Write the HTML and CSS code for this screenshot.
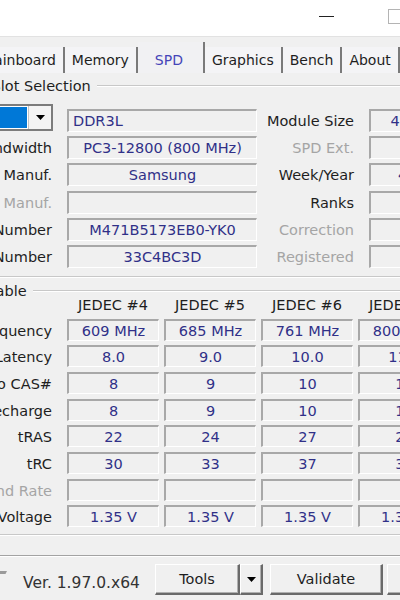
FILE: index.html
```html
<!DOCTYPE html>
<html lang="en">
<head>
  <title>CPU-Z — SPD</title>
  <meta charset="utf-8">
  <meta name="viewport" content="width=device-width, initial-scale=1">
  <link rel="stylesheet" href="styles.css">
</head>
<body>

  <div class="window">
    <div class="titlebar">
      <span class="win-btn win-min"></span>
      <span class="win-btn win-max"></span>
      <span class="win-btn win-close"></span>
    </div>

    <div class="tabs">
      <span class="tab">Mainboard</span>
      <span class="tab">Memory</span>
      <span class="tab tab-active">SPD</span>
      <span class="tab">Graphics</span>
      <span class="tab">Bench</span>
      <span class="tab">About</span>
    </div>

    <div class="panel">
      <section class="group">
        <div class="group-title"><span>Memory Slot Selection</span></div>
        <div class="slot-grid">
          <div class="combo">
            <span class="combo-value">Slot #1</span>
            <span class="combo-arrow">
              <svg width="9" height="5" viewBox="0 0 9 5"><path d="M0 0h9L4.5 5z" fill="#000"/></svg>
            </span>
          </div>
          <div class="field field-left">DDR3L</div>
          <div class="label">Module Size</div>
          <div class="field">4 GBytes</div>

          <div class="label">Max Bandwidth</div>
          <div class="field">PC3-12800 (800 MHz)</div>
          <div class="label label-off">SPD Ext.</div>
          <div class="field"></div>

          <div class="label">Module Manuf.</div>
          <div class="field">Samsung</div>
          <div class="label">Week/Year</div>
          <div class="field">40 / 13</div>

          <div class="label label-off">DRAM Manuf.</div>
          <div class="field"></div>
          <div class="label">Ranks</div>
          <div class="field">Dual</div>

          <div class="label">Part Number</div>
          <div class="field">M471B5173EB0-YK0</div>
          <div class="label label-off">Correction</div>
          <div class="field"></div>

          <div class="label">Serial Number</div>
          <div class="field">33C4BC3D</div>
          <div class="label label-off">Registered</div>
          <div class="field"></div>
        </div>
      </section>

      <section class="group group-timings">
        <div class="group-title group-title-tight"><span>Timings Table</span></div>
        <div class="timings-grid">
          <div></div>
          <div class="col-head">JEDEC #4</div>
          <div class="col-head">JEDEC #5</div>
          <div class="col-head">JEDEC #6</div>
          <div class="col-head">JEDEC #7</div>

          <div class="label">Frequency</div>
          <div class="field">609 MHz</div>
          <div class="field">685 MHz</div>
          <div class="field">761 MHz</div>
          <div class="field">800 MHz</div>

          <div class="label">CAS# Latency</div>
          <div class="field">8.0</div>
          <div class="field">9.0</div>
          <div class="field">10.0</div>
          <div class="field">11.0</div>

          <div class="label">RAS# to CAS#</div>
          <div class="field">8</div>
          <div class="field">9</div>
          <div class="field">10</div>
          <div class="field">11</div>

          <div class="label">RAS# Precharge</div>
          <div class="field">8</div>
          <div class="field">9</div>
          <div class="field">10</div>
          <div class="field">11</div>

          <div class="label">tRAS</div>
          <div class="field">22</div>
          <div class="field">24</div>
          <div class="field">27</div>
          <div class="field">28</div>

          <div class="label">tRC</div>
          <div class="field">30</div>
          <div class="field">33</div>
          <div class="field">37</div>
          <div class="field">39</div>

          <div class="label label-off">Command Rate</div>
          <div class="field"></div>
          <div class="field"></div>
          <div class="field"></div>
          <div class="field"></div>

          <div class="label">Voltage</div>
          <div class="field">1.35 V</div>
          <div class="field">1.35 V</div>
          <div class="field">1.35 V</div>
          <div class="field">1.35 V</div>
        </div>
      </section>
    </div>

    <div class="footer">
      <svg class="logo" width="20" height="20" viewBox="0 0 20 20">
        <path d="M6 3h13l-1.5 3H12l-4 12H4l4-12H5z" fill="#9a9a9a"/>
      </svg>
      <span class="version">Ver. 1.97.0.x64</span>
      <div class="split-btn">
        <span class="btn btn-main">Tools</span>
        <span class="btn btn-arrow">
          <svg width="9" height="5" viewBox="0 0 9 5"><path d="M0 0h9L4.5 5z" fill="#000"/></svg>
        </span>
      </div>
      <span class="btn btn-validate">Validate</span>
      <span class="btn btn-close">Close</span>
    </div>
  </div>

</body>
</html>
```

FILE: styles.css
```css
*, *::before, *::after {
  margin: 0;
  padding: 0;
  box-sizing: border-box;
}

html, body {
  overflow: hidden;
}

body {
  width: 400px;
  height: 600px;
  background-color: #f0f0f0;
  color: #1e1e1e;
  font-family: "DejaVu Sans", Verdana, sans-serif;
  font-size: 14.5px;
}

/* the window is wider than the viewport, its left part is cut off */
.window {
  width: 580px;
  margin-left: -80px;
}

.titlebar {
  height: 37px;
  display: flex;
  justify-content: flex-end;
  padding-right: 1px;
  background-color: #fff;
  border-bottom: 1px solid #e2e2e2;
}

.win-btn {
  width: 69px;
  height: 33px;
  display: flex;
  align-items: center;
  justify-content: center;
}

.win-min::before {
  content: "";
  width: 15px;
  height: 1px;
  background-color: #222;
}

.win-max::before {
  content: "";
  width: 15px;
  height: 15px;
  border: 1px solid #b4b4b4;
}

.tabs {
  height: 36px;
  display: flex;
  align-items: flex-end;
  padding-left: 55px;
  font-size: 14px;
}

.tab {
  height: 26px;
  padding: 0 7px;
  line-height: 26px;
  border-right: 2px solid #7a7a7a;
  background-color: #f4f4f6;
  white-space: nowrap;
}

.tab-active {
  height: 31px;
  padding: 5px 20px 0 17px;
  color: #4545b8;
  background-color: #f1f1f3;
}

.panel {
  padding-top: 4px;
  padding-bottom: 20px;
  border-bottom: 1px solid #a3a3a3;
  box-shadow: 0 1px 0 #fff;
}

.group {
  margin: 0 6px 0 2px;
  padding-bottom: 8px;
  border-bottom: 1px solid #c8c8c8;
  box-shadow: 0 1px 0 #fff;
}

.group-title {
  height: 18px;
  display: flex;
  align-items: center;
  padding-left: 6px;
  white-space: nowrap;
}

.group-title::after {
  content: "";
  flex: 1;
  margin-left: 6px;
  border-top: 1px solid #c8c8c8;
  border-bottom: 1px solid #fff;
}

.group-title-tight {
  height: 17px;
}

.group-timings {
  margin-top: 6px;
  padding-bottom: 7px;
}

.slot-grid {
  display: grid;
  grid-template-columns: 132px 190px 102px 108px;
  grid-auto-rows: 23px;
  column-gap: 5px;
  row-gap: 4.2px;
  margin-top: 14px;
  padding-left: 8px;
}

.timings-grid {
  display: grid;
  grid-template-columns: 132px repeat(4, 92px);
  grid-template-rows: 14px;
  grid-auto-rows: 22px;
  column-gap: 5px;
  row-gap: 4.7px;
  padding-left: 8px;
}

.label {
  padding: 2px 10px 0 0;
  line-height: 21px;
  text-align: right;
  white-space: nowrap;
}

.timings-grid .label {
  line-height: 21px;
}

.label-off {
  color: #a5a5a5;
}

.col-head {
  line-height: 11px;
  text-align: center;
  white-space: nowrap;
}

.field {
  overflow: hidden;
  padding-top: 1px;
  border-style: solid;
  border-width: 2px 1px 1px 2px;
  border-color: #a8a8a8 #fff #fff #a8a8a8;
  background-color: #f0f0f0;
  color: #303088;
  line-height: 19px;
  text-align: center;
  white-space: nowrap;
}

.timings-grid .field {
  line-height: 18px;
}

.field-left {
  padding-left: 4px;
  text-align: left;
}

.combo {
  width: 120px;
  height: 27px;
  margin: -5px 0 0 3px;
  display: flex;
  border: 2px solid #7c7c7c;
  background-color: #fff;
}

.combo-value {
  flex: 1;
  margin: 1px;
  padding-left: 4px;
  line-height: 21px;
  color: #fff;
  background-color: #0078d7;
  white-space: nowrap;
}

.combo-arrow {
  width: 23px;
  display: flex;
  align-items: center;
  justify-content: center;
  border-left: 1px solid #c4c4c4;
  background-color: #f4f4f4;
}

.footer {
  height: 44px;
  display: flex;
  align-items: flex-start;
  padding-top: 8px;
}

.logo {
  margin: 4px 0 0 68px;
}

.version {
  width: 132px;
  margin: 4px 0 0 15px;
  line-height: 31px;
  font-size: 15.5px;
  color: #333;
  white-space: nowrap;
}

.split-btn {
  display: flex;
}

.btn {
  height: 31px;
  display: flex;
  align-items: center;
  justify-content: center;
  border-style: solid;
  border-width: 1px 2px 2px 1px;
  border-color: #fff #6a6a6a #6a6a6a #fff;
  box-shadow: inset -1px -1px 0 #b0b0b0;
  background-color: #f0f0f0;
  color: #1e1e1e;
}

.btn-main {
  width: 85px;
}

.btn-arrow {
  width: 23px;
}

.btn-validate {
  width: 113px;
  margin-left: 7px;
}

.btn-close {
  width: 113px;
  margin-left: 4px;
}
```
